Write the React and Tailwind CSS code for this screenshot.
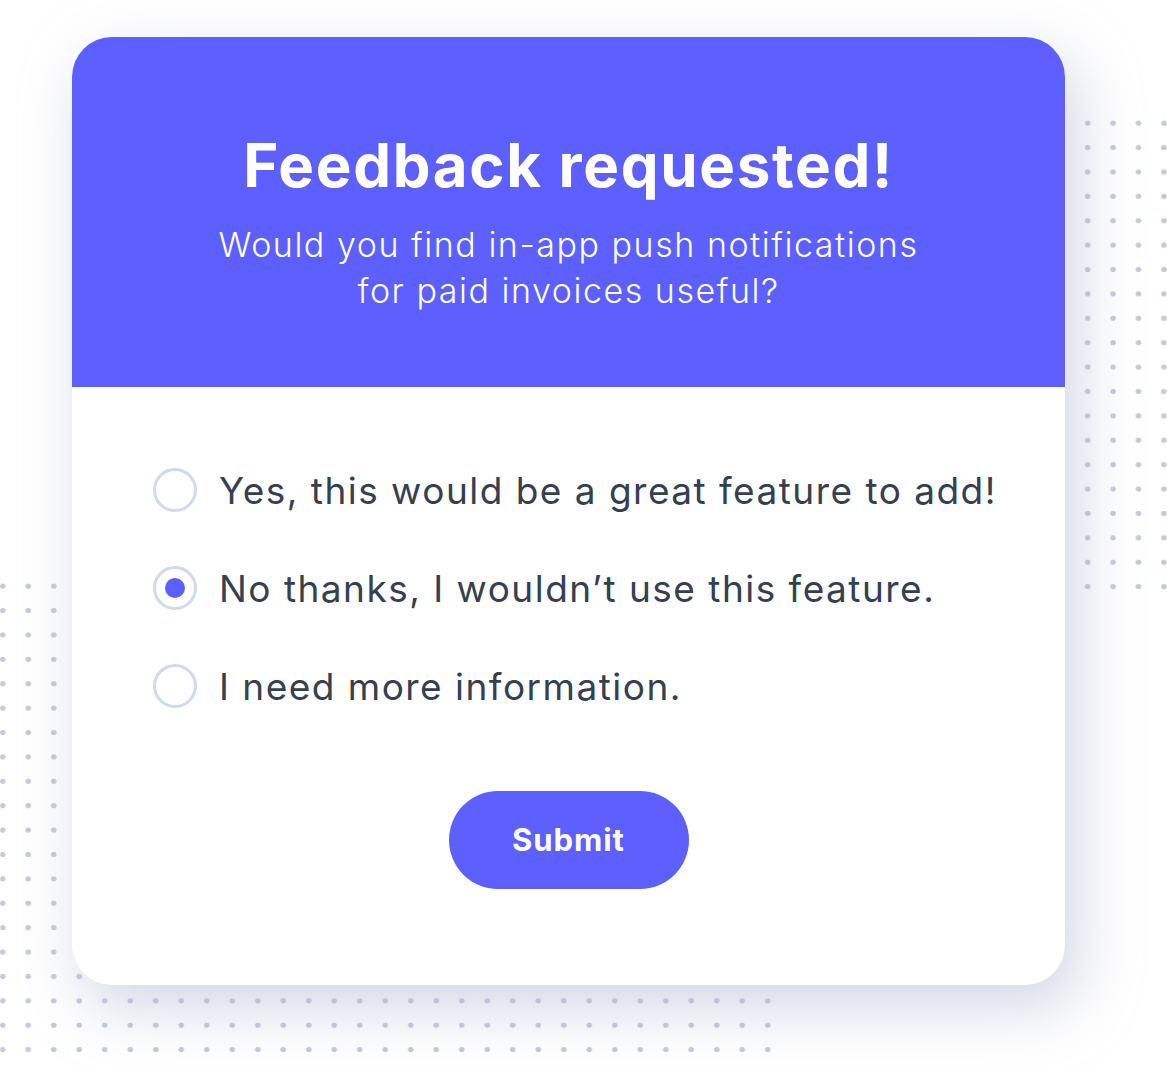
import React, { useState } from "react";

const options = [
  "Yes, this would be a great feature to add!",
  "No thanks, I wouldn\u2019t use this feature.",
  "I need more information.",
];

const Radio = ({ checked }) => (
  <span className="flex h-[44px] w-[44px] shrink-0 items-center justify-center rounded-full border-[3px] border-[#cfdaee] bg-white">
    {checked && <span className="h-[20px] w-[20px] rounded-full bg-[#5d5fff]" />}
  </span>
);

const App = () => {
  const [selected, setSelected] = useState(1);

  return (
    <div className="relative h-[1066px] w-[1167px] overflow-hidden bg-white font-['Inter',sans-serif]">
      {/* Decorative dot grids */}
      <div className="absolute left-[1075px] top-[111px] h-[488px] w-[102px] bg-[radial-gradient(circle,#c4c9db_2.4px,transparent_3px)] bg-size-[25.4px_24.4px]" />
      <div className="absolute left-[-10px] top-[574px] h-[488px] w-[791px] bg-[radial-gradient(circle,#c4c9db_2.4px,transparent_3px)] bg-size-[25.5px_24.4px]" />

      <div className="relative pl-[72px] pt-[37px]">
        <div className="w-[993px] overflow-hidden rounded-[40px] bg-white shadow-[12px_22px_60px_rgba(168,176,208,0.5)]">
          {/* Header */}
          <div className="flex h-[350px] flex-col items-center bg-[#5d5fff] pt-[86px] text-center text-white">
            <h1 className="text-[60px] font-bold leading-[84px] tracking-[0.028em]">Feedback requested!</h1>
            <p className="mt-[15px] text-[34px] font-light leading-[46px] tracking-[0.045em]">
              Would you find in-app push notifications
              <br />
              for paid invoices useful?
            </p>
          </div>

          {/* Options */}
          <div className="flex flex-col gap-[54px] pl-[81px] pt-[81px]">
            {options.map((label, i) => (
              <label
                key={label}
                onClick={() => setSelected(i)}
                className="flex h-[44px] cursor-pointer items-center gap-[22px]"
              >
                <Radio checked={selected === i} />
                <span className="whitespace-nowrap text-[37px] leading-none tracking-[0.04em] text-[#363f50]">{label}</span>
              </label>
            ))}
          </div>

          <div className="flex justify-center pb-[96px] pt-[83px]">
            <button className="h-[98px] w-[240px] rounded-full bg-[#5d5fff] text-[31px] font-bold tracking-[0.03em] text-white">
              Submit
            </button>
          </div>
        </div>
      </div>
    </div>
  );
};

export default App;
